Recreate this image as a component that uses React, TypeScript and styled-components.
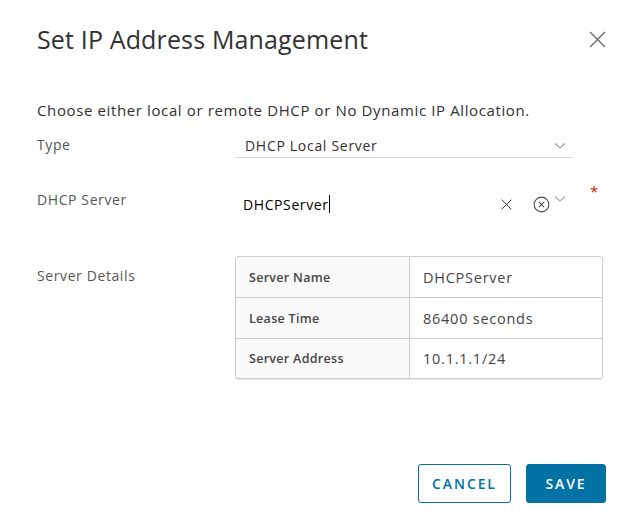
import React from "react";
import styled, { createGlobalStyle } from "styled-components";

const FONT = `"Open Sans", "Lato", sans-serif`;

const Global = createGlobalStyle`
  html, body { margin: 0; padding: 0; background: #fff; }
  body { font-family: ${FONT}; color: #313131; }
  * { box-sizing: border-box; }
`;

const Modal = styled.div`
  width: 642px;
  height: 522px;
  display: flex;
  flex-direction: column;
  padding: 23px 36px 19px 37px;
  background: #fff;
`;

const Header = styled.div`
  display: flex;
  align-items: center;
  justify-content: space-between;
  height: 32px;
`;

const Title = styled.h3`
  margin: 0;
  font-size: 25px;
  font-weight: 400;
  line-height: 32px;
  letter-spacing: 0.15px;
  color: #313131;
`;

const CloseBtn = styled.button`
  border: 0;
  background: none;
  padding: 0;
  width: 18px;
  height: 18px;
  display: flex;
  align-items: center;
  justify-content: center;
  cursor: pointer;
`;

const Description = styled.p`
  margin: 44px 0 0;
  font-size: 15px;
  font-weight: 400;
  letter-spacing: 0.62px;
  color: #313131;
  line-height: 22px;
`;

const Form = styled.div`
  display: grid;
  grid-template-columns: 198px 1fr;
  margin-top: 13px;
`;

const Label = styled.div<{ $h: number; $pt?: number }>`
  height: ${(p) => p.$h}px;
  padding-top: ${(p) => p.$pt ?? 0}px;
  font-size: 14px;
  letter-spacing: 0.6px;
  color: #565656;
  line-height: 22px;
`;

const Control = styled.div<{ $h: number }>`
  height: ${(p) => p.$h}px;
  position: relative;
`;

const SelectBox = styled.div`
  width: 338px;
  height: 24px;
  display: flex;
  align-items: center;
  justify-content: space-between;
  padding: 0 7px 0 10px;
  border-bottom: 1px solid #dcdcdc;
  font-size: 14px;
  letter-spacing: 0.7px;
  color: #313131;
`;

const InputRow = styled.div`
  width: 338px;
  height: 30px;
  display: flex;
  align-items: center;
  padding: 0 7px 0 8px;
  font-size: 14px;
  letter-spacing: 0.6px;
  color: #000;
`;

const InputText = styled.span`
  flex: 1;
  display: flex;
  align-items: center;
`;

const Caret = styled.span`
  display: inline-block;
  width: 1px;
  height: 18px;
  background: #000;
  margin-left: 0;
`;

const IconGroup = styled.div`
  display: flex;
  align-items: center;
`;

const Spacer = styled.span<{ $w: number }>`
  display: inline-block;
  width: ${(p) => p.$w}px;
`;

const ChevronUp = styled.span`
  display: flex;
  margin-top: -11px;
`;

const Required = styled.span`
  position: absolute;
  left: 355px;
  top: -8px;
  color: #c92100;
  font-size: 15px;
`;

const Table = styled.div`
  width: 368px;
  border: 1px solid #cccccc;
  border-radius: 3px;
  overflow: hidden;
  box-shadow: 0 1px 0 #e8e8e8;
`;

const Row = styled.div<{ $last?: boolean }>`
  display: grid;
  grid-template-columns: 174px 1fr;
  height: ${(p) => (p.$last ? 39 : 41)}px;
  border-bottom: ${(p) => (p.$last ? "none" : "1px solid #cccccc")};
`;

const KeyCell = styled.div`
  background: #fafafa;
  border-right: 1px solid #cccccc;
  display: flex;
  align-items: center;
  padding-left: 13px;
  font-size: 12.5px;
  font-weight: 600;
  letter-spacing: 0.3px;
  color: #454545;
`;

const ValCell = styled.div`
  display: flex;
  align-items: center;
  padding-left: 13px;
  font-size: 14.5px;
  letter-spacing: 0.75px;
  color: #454545;
`;

const Footer = styled.div`
  margin-top: auto;
  display: flex;
  justify-content: flex-end;
  gap: 15px;
`;

const Button = styled.button<{ $primary?: boolean; $w: number }>`
  width: ${(p) => p.$w}px;
  height: 39px;
  padding: 0;
  border-radius: 3px;
  border: 1px solid #0072a3;
  background: ${(p) => (p.$primary ? "#0072a3" : "#fff")};
  color: ${(p) => (p.$primary ? "#fff" : "#0072a3")};
  font-family: ${FONT};
  font-size: 14px;
  font-weight: 600;
  letter-spacing: 1.9px;
  text-transform: uppercase;
  cursor: pointer;
`;

const Chevron = ({ color = "#9a9a9a" }: { color?: string }) => (
  <svg width="12" height="8" viewBox="0 0 12 8">
    <path d="M1 1.5 L6 6 L11 1.5" fill="none" stroke={color} strokeWidth="1.1" />
  </svg>
);

const XIcon = ({ size, color, w }: { size: number; color: string; w: number }) => (
  <svg width={size} height={size} viewBox="0 0 16 16">
    <path d="M1 1 L15 15 M15 1 L1 15" stroke={color} strokeWidth={w} fill="none" />
  </svg>
);

const CircleX = () => (
  <svg width="17" height="17" viewBox="0 0 18 18">
    <circle cx="9" cy="9" r="7.8" fill="none" stroke="#4a4a4a" strokeWidth="1.1" />
    <path d="M6.3 6.3 L11.7 11.7 M11.7 6.3 L6.3 11.7" stroke="#4a4a4a" strokeWidth="1.1" />
  </svg>
);

export default function App() {
  const rows = [
    ["Server Name", "DHCPServer"],
    ["Lease Time", "86400 seconds"],
    ["Server Address", "10.1.1.1/24"],
  ];
  return (
    <>
      <Global />
      <Modal>
        <Header>
          <Title>Set IP Address Management</Title>
          <CloseBtn aria-label="Close">
            <XIcon size={17} color="#666" w={1.2} />
          </CloseBtn>
        </Header>
        <Description>Choose either local or remote DHCP or No Dynamic IP Allocation.</Description>
        <Form>
          <Label $h={55}>Type</Label>
          <Control $h={55}>
            <SelectBox>
              <span>DHCP Local Server</span>
              <Chevron />
            </SelectBox>
          </Control>
          <Label $h={67}>DHCP Server</Label>
          <Control $h={67}>
            <InputRow>
              <InputText>
                DHCPServer
                <Caret />
              </InputText>
              <IconGroup>
                <XIcon size={11} color="#333" w={1.4} />
                <Spacer $w={21} />
                <CircleX />
                <Spacer $w={4} />
                <ChevronUp>
                  <Chevron color="#aaa" />
                </ChevronUp>
              </IconGroup>
            </InputRow>
            <Required>*</Required>
          </Control>
          <Label $h={124} $pt={9}>Server Details</Label>
          <Control $h={124}>
            <Table>
              {rows.map(([k, v], i) => (
                <Row key={k} $last={i === rows.length - 1}>
                  <KeyCell>{k}</KeyCell>
                  <ValCell>{v}</ValCell>
                </Row>
              ))}
            </Table>
          </Control>
        </Form>
        <Footer>
          <Button $w={93}>Cancel</Button>
          <Button $primary $w={80}>Save</Button>
        </Footer>
      </Modal>
    </>
  );
}
